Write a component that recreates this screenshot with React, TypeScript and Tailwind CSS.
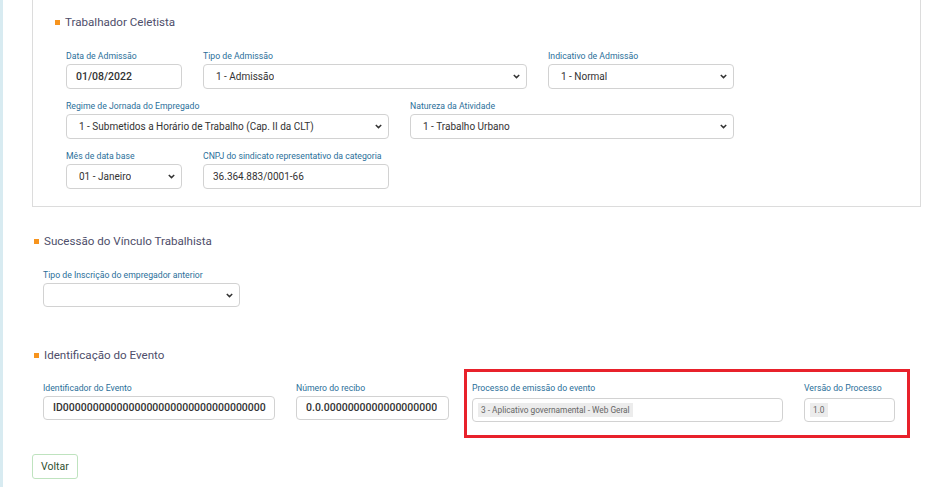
import React from 'react';

const font = { fontFamily: 'Roboto, "Noto Sans", sans-serif' };

const Chevron: React.FC = () => (
  <svg width="7" height="5" viewBox="0 0 7 5" className="shrink-0">
    <path d="M0.8 1l2.7 2.6L6.2 1" fill="none" stroke="#333" strokeWidth="1.5" />
  </svg>
);

const SectionTitle: React.FC<{ title: string }> = ({ title }) => (
  <div className="flex items-center h-[16px]">
    <span className="w-[5px] h-[5px] bg-[#f7941d] mr-[5px]" />
    <span className="text-[11.6px] leading-[16px] text-[#4e4e6a]">{title}</span>
  </div>
);

type FieldProps = {
  label: string;
  value?: string;
  width: string;
  select?: boolean;
  bold?: boolean;
  h?: string;
};

const Field: React.FC<FieldProps> = ({ label, value = '', width, select, bold, h = 'h-[25px]' }) => (
  <div className={`${width} shrink-0`}>
    <div className="text-[8.7px] leading-[14px] text-[#2b6f9a] whitespace-nowrap">{label}</div>
    <div
      className={`${h} mt-[1px] flex items-center justify-between border border-[#d2d2d2] rounded-[4px] bg-white ${
        select ? 'pl-[12px] pr-[6px]' : 'pl-[9px] pr-[3px]'
      }`}
    >
      <span
        className={`text-[#333] whitespace-nowrap overflow-hidden ${
          bold ? 'font-medium text-[10.5px]' : 'text-[10px]'
        }`}
      >
        {value}
      </span>
      {select && <Chevron />}
    </div>
  </div>
);

const ReadOnly: React.FC<{ label: string; value: string; width: string }> = ({ label, value, width }) => (
  <div className={`${width} shrink-0`}>
    <div className="text-[8.7px] leading-[14px] text-[#2b6f9a] whitespace-nowrap">{label}</div>
    <div className="h-[24px] mt-[3px] flex items-center border border-[#d2d2d2] rounded-[4px] bg-white pl-[5px]">
      <span className="bg-[#ececec] text-[8.3px] leading-[14px] text-[#666] px-[3px] whitespace-nowrap">{value}</span>
    </div>
  </div>
);

export default function App() {
  return (
    <div className="flex w-[927px] h-[487px] bg-white overflow-hidden" style={font}>
      <div className="w-[3px] bg-[#d8ebf1] shrink-0" />
      <div className="flex-1 pl-[29px] pr-[6px]">
        {/* Trabalhador Celetista */}
        <div className="border border-t-0 border-[#dcdcdc] pt-[14px] pb-[17px] pl-[22px]">
          <SectionTitle title="Trabalhador Celetista" />
          <div className="ml-[11px] mt-[19px] flex flex-col gap-[10px]">
            <div className="flex gap-[21px]">
              <Field label="Data de Admissão" value="01/08/2022" width="w-[116px]" bold />
              <Field label="Tipo de Admissão" value="1 - Admissão" width="w-[324px]" select />
              <Field label="Indicativo de Admissão" value="1 - Normal" width="w-[186px]" select />
            </div>
            <div className="flex gap-[21px]">
              <Field
                label="Regime de Jornada do Empregado"
                value="1 - Submetidos a Horário de Trabalho (Cap. II da CLT)"
                width="w-[323px]"
                select
              />
              <Field label="Natureza da Atividade" value="1 - Trabalho Urbano" width="w-[324px]" select />
            </div>
            <div className="flex gap-[21px]">
              <Field label="Mês de data base" value="01 - Janeiro" width="w-[116px]" select />
              <Field label="CNPJ do sindicato representativo da categoria" value="36.364.883/0001-66" width="w-[186px]" />
            </div>
          </div>
        </div>

        {/* Sucessão do Vínculo Trabalhista */}
        <div className="mt-[26px] pl-[2px]">
          <SectionTitle title="Sucessão do Vínculo Trabalhista" />
        </div>
        <div className="ml-[11px] mt-[19px]">
          <Field label="Tipo de Inscrição do empregador anterior" width="w-[197px]" select h="h-[24px]" />
        </div>

        {/* Identificação do Evento */}
        <div className="mt-[40px] pl-[2px]">
          <SectionTitle title="Identificação do Evento" />
        </div>
        <div className="ml-[11px] mt-[18px] flex items-start">
          <Field
            label="Identificador do Evento"
            value={'ID' + '0'.repeat(34)}
            width="w-[232px]"
            bold
            h="h-[24px]"
          />
          <div className="ml-[21px]">
            <Field
              label="Número do recibo"
              value={'0.0.' + '0'.repeat(19)}
              width="w-[153px]"
              bold
              h="h-[24px]"
            />
          </div>
          <div className="ml-[15px] -mt-[12px] border-[3px] border-[#e8212b] pt-[9px] pb-[13px] pl-[5px] pr-[12px] flex gap-[21px]">
            <ReadOnly
              label="Processo de emissão do evento"
              value="3 - Aplicativo governamental - Web Geral"
              width="w-[311px]"
            />
            <ReadOnly label="Versão do Processo" value="1.0" width="w-[91px]" />
          </div>
        </div>

        <div className="mt-[15px]">
          <button className="h-[25px] px-[8px] border border-[#bfe3bf] rounded-[3px] bg-white text-[10.5px] text-[#2f4f2f]">
            Voltar
          </button>
        </div>
      </div>
    </div>
  );
}
